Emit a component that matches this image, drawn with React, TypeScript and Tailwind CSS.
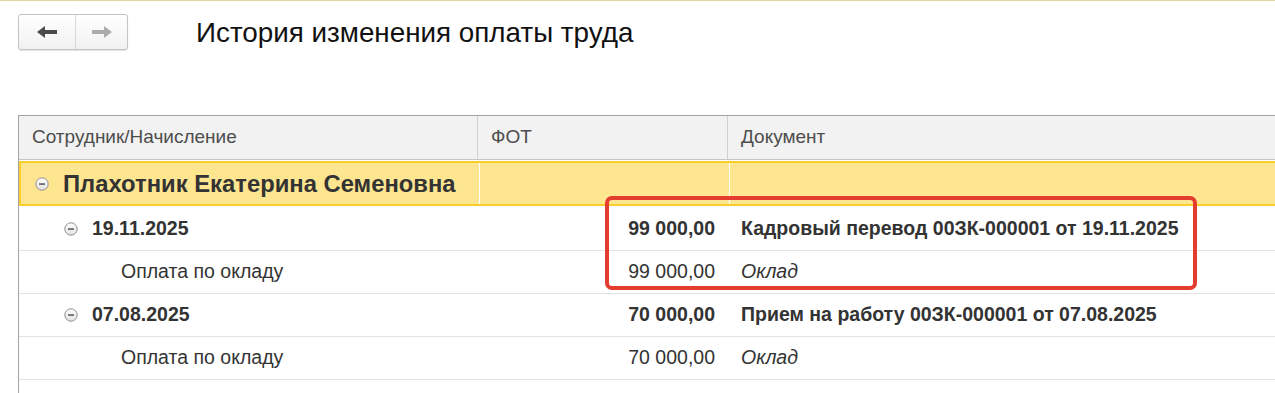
import React from "react";

const font = { fontFamily: '"Liberation Sans", Arial, sans-serif' };

function ArrowLeft({ color }: { color: string }) {
  return (
    <svg width="20" height="14" viewBox="0 0 20 14">
      <polygon points="0,7 8,1 8,5 20,5 20,9 8,9 8,13" fill={color} />
    </svg>
  );
}

function ArrowRight({ color }: { color: string }) {
  return (
    <svg width="20" height="14" viewBox="0 0 20 14">
      <polygon points="20,7 12,1 12,5 0,5 0,9 12,9 12,13" fill={color} />
    </svg>
  );
}

function Collapse() {
  return (
    <svg width="14" height="14" viewBox="0 0 14 14" className="shrink-0">
      <defs>
        <linearGradient id="cg" x1="0" y1="0" x2="0" y2="1">
          <stop offset="0" stopColor="#ffffff" />
          <stop offset="1" stopColor="#e2e2e2" />
        </linearGradient>
      </defs>
      <circle cx="7" cy="7" r="6.2" fill="url(#cg)" stroke="#8f8f8f" strokeWidth="1" />
      <rect x="4" y="6.3" width="6" height="1.5" fill="#555" />
    </svg>
  );
}

const rows = [
  { date: "19.11.2025", sum: "99 000,00", doc: "Кадровый перевод 00ЗК-000001 от 19.11.2025" },
  { date: "07.08.2025", sum: "70 000,00", doc: "Прием на работу 00ЗК-000001 от 07.08.2025" },
];

export default function App() {
  return (
    <div
      className="relative w-[1275px] h-[393px] overflow-hidden bg-white border-t border-[#e6d39a] text-[#333]"
      style={font}
    >
      <div className="flex items-center pt-[13px] pl-[18px]">
        <div className="flex h-[36px] w-[110px] rounded-[3px] border border-[#c4c4c4] bg-gradient-to-b from-white to-[#f1f1f1] shadow-[0_1px_1px_rgba(0,0,0,0.12)]">
          <div className="flex w-[57px] items-center justify-center border-r border-[#d9d9d9]">
            <ArrowLeft color="#4a4a4a" />
          </div>
          <div className="flex flex-1 items-center justify-center">
            <ArrowRight color="#acacac" />
          </div>
        </div>
        <h1 className="ml-[68px] mt-[2px] text-[27.8px] leading-none text-[#111]">История изменения оплаты труда</h1>
      </div>

      <div className="ml-[18px] mt-[65px] border-l border-t border-[#a3a3a3]">
        <div className="grid h-[44px] grid-cols-[459px_250px_1fr] border-b border-[#c6c6c6] bg-[#f2f2f2] text-[19px] text-[#4d4d4d]">
          <div className="flex items-center border-r border-[#d0d0d0] pl-[13px]">Сотрудник/Начисление</div>
          <div className="flex items-center border-r border-[#d0d0d0] pl-[13px]">ФОТ</div>
          <div className="flex items-center pl-[13px]">Документ</div>
        </div>
        <div className="h-px bg-white" />
        <div className="grid h-[45px] grid-cols-[459px_250px_1fr] border-2 border-r-0 border-[#f9cd2c] bg-[#fee590]">
          <div className="flex items-center gap-[14px] border-r border-white pl-[14px]">
            <Collapse />
            <span className="text-[23.8px] font-bold text-[#333]">Плахотник Екатерина Семеновна</span>
          </div>
          <div className="border-r border-white" />
          <div />
        </div>
        <div className="h-px bg-white" />
        {rows.map((r, i) => (
          <React.Fragment key={r.date}>
            <div
              className={`grid grid-cols-[459px_250px_1fr] border-b border-[#e3e3e3] text-[19.5px] font-bold ${
                i === 0 ? "h-[44px]" : "h-[43px]"
              }`}
            >
              <div className="flex items-center gap-[14px] pl-[45px]">
                <Collapse />
                <span>{r.date}</span>
              </div>
              <div className="flex items-center justify-end pr-[13px]">{r.sum}</div>
              <div className="flex items-center pl-[13px]">{r.doc}</div>
            </div>
            <div className="grid h-[43px] grid-cols-[459px_250px_1fr] border-b border-[#e3e3e3] text-[19.5px]">
              <div className="flex items-center pl-[102px]">Оплата по окладу</div>
              <div className="flex items-center justify-end pr-[13px]">{r.sum}</div>
              <div className="flex items-center pl-[13px] italic">Оклад</div>
            </div>
          </React.Fragment>
        ))}
        <div className="h-[20px]" />
      </div>

      <div className="pointer-events-none absolute left-[605px] top-[195px] h-[94px] w-[592px] rounded-[7px] border-4 border-[#e53c30]" />
    </div>
  );
}
